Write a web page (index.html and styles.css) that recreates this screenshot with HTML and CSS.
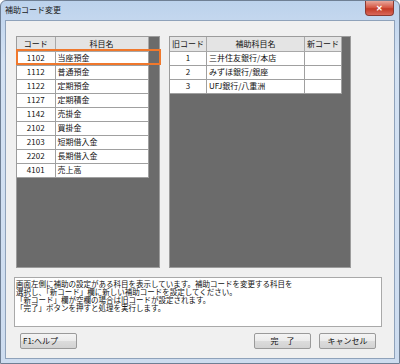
FILE: index.html
```html
<!DOCTYPE html>
<html lang="ja">
<head>
    <meta charset="UTF-8">
    <title>補助コード変更</title>
    <link rel="stylesheet" href="styles.css">
</head>
<body>

<div class="window">
    <div class="titleBar">
        <span class="titleText">補助コード変更</span>
        <span class="btnClose">&#x2715;</span>
    </div>

    <div class="client">
        <div class="gridRow">

            <div class="grid gridLeft">
                <table>
                    <tr><th class="colCode">コード</th><th class="colName">科目名</th></tr>
                    <tr><td class="num">1102</td><td>当座預金</td></tr>
                    <tr><td class="num">1112</td><td>普通預金</td></tr>
                    <tr><td class="num">1122</td><td>定期預金</td></tr>
                    <tr><td class="num">1127</td><td>定期積金</td></tr>
                    <tr><td class="num">1142</td><td>売掛金</td></tr>
                    <tr><td class="num">2102</td><td>買掛金</td></tr>
                    <tr><td class="num">2103</td><td>短期借入金</td></tr>
                    <tr><td class="num">2202</td><td>長期借入金</td></tr>
                    <tr><td class="num">4101</td><td>売上高</td></tr>
                </table>
                <div class="selection"></div>
            </div>

            <div class="grid gridRight">
                <table>
                    <tr><th class="colOld">旧コード</th><th class="colSub">補助科目名</th><th class="colNew">新コード</th></tr>
                    <tr><td class="num">1</td><td>三井住友銀行/本店</td><td></td></tr>
                    <tr><td class="num">2</td><td>みずほ銀行/銀座</td><td></td></tr>
                    <tr><td class="num">3</td><td>UFJ銀行/八重洲</td><td></td></tr>
                </table>
            </div>
        </div>

        <div class="memo">
            <p>画面左側に補助の設定がある科目を表示しています。補助コードを変更する科目を</p>
            <p>選択し、「新コード」欄に新しい補助コードを設定してください。</p>
            <p>「新コード」欄が空欄の場合は旧コードが設定されます。</p>
            <p>「完了」ボタンを押すと処理を実行します。</p>
        </div>

        <div class="buttonRow">
            <button class="btn btnHelp">F1:ヘルプ</button>
            <div class="rightButtons">
                <button class="btn">完　了</button>
                <button class="btn">キャンセル</button>
            </div>
        </div>
    </div>
</div>

</body>
</html>
```

FILE: styles.css
```css
*{
    margin: 0px;
    padding: 0px;
    box-sizing: border-box;
}
body {
    font-family: "Noto Sans CJK JP", "Liberation Sans", sans-serif;
    font-size: 8px;
    background-color: #ffffff;
}
.window {
    width: 400px;
    height: 364px;
    display: flex;
    flex-direction: column;
    background: linear-gradient(to bottom, #bcd2ec, #d4e2f3 60px, #cddcef);
    border: 1px solid #6f7f94;
    border-radius: 6px 6px 0 0;
    padding: 0 4px 4px 4px;
}
.titleBar {
    height: 19px;
    display: flex;
    justify-content: space-between;
    align-items: flex-start;
}
.titleText {
    margin-top: 4px;
    font-size: 8px;
    line-height: 10px;
    color: #1a1a1a;
}
.btnClose {
    width: 29px;
    height: 15px;
    margin-right: 1px;
    border: 1px solid #8a3a32;
    border-top: none;
    border-radius: 0 0 4px 4px;
    background: linear-gradient(to bottom, #e8a89c, #d4523e 50%, #c23a26 55%, #d9685a);
    color: #ffffff;
    font-size: 8px;
    font-weight: bold;
    line-height: 14px;
    text-align: center;
}
.client {
    flex: 1;
    background-color: #f0f0f0;
    border: 1px solid #8fa2ba;
    display: flex;
    flex-direction: column;
    padding: 15px 0 0 8px;
}
.gridRow {
    display: flex;
    gap: 9px;
    padding-left: 2px;
}
.grid {
    position: relative;
    height: 232px;
    background-color: #6b6b6b;
    border: 1px solid #9c9c9c;
}
.gridLeft {
    width: 144px;
}
.gridRight {
    width: 182px;
}
table {
    border-collapse: collapse;
    background-color: #ffffff;
}
th, td {
    height: 14px;
    padding: 0 2px;
    border: 1px solid #a0a0a0;
    font-size: 8px;
    font-weight: normal;
    line-height: 12px;
    white-space: nowrap;
    text-align: left;
    color: #111111;
}
th {
    background-color: #e4e4e4;
    text-align: center;
    border-color: #a8a8a8;
}
table tr:first-child th {
    border-top: none;
}
th:first-child, td:first-child {
    border-left: none;
}
.num {
    text-align: center;
}
.colCode { width: 38px; }
.colName { width: 93px; }
.colOld { width: 35px; }
.colSub { width: 98px; }
.colNew { width: 37px; }
.selection {
    position: absolute;
    left: -1px;
    top: 12px;
    width: 145px;
    height: 16px;
    border: 2px solid #f0782c;
}
.memo {
    width: 368px;
    height: 50px;
    margin-top: 9px;
    background-color: #ffffff;
    border: 1px solid #a9a9a9;
    padding: 2px 0 0 1px;
    font-size: 7.5px;
    line-height: 8px;
    color: #111111;
}
.memo p {
    height: 8px;
    white-space: nowrap;
}
.buttonRow {
    display: flex;
    justify-content: space-between;
    width: 356px;
    margin: 6px 0 0 6px;
}
.rightButtons {
    display: flex;
    gap: 8px;
}
.btn {
    width: 57px;
    height: 16px;
    font-family: "Noto Sans CJK JP", "Liberation Sans", sans-serif;
    font-size: 8px;
    line-height: 14px;
    color: #111111;
    border: 1px solid #9a9a9a;
    border-radius: 2px;
    background: linear-gradient(to bottom, #f4f4f4, #ebebeb 50%, #dcdcdc 51%, #d2d2d2);
}
.btnHelp {
    text-align: left;
    padding-left: 2px;
}
```
